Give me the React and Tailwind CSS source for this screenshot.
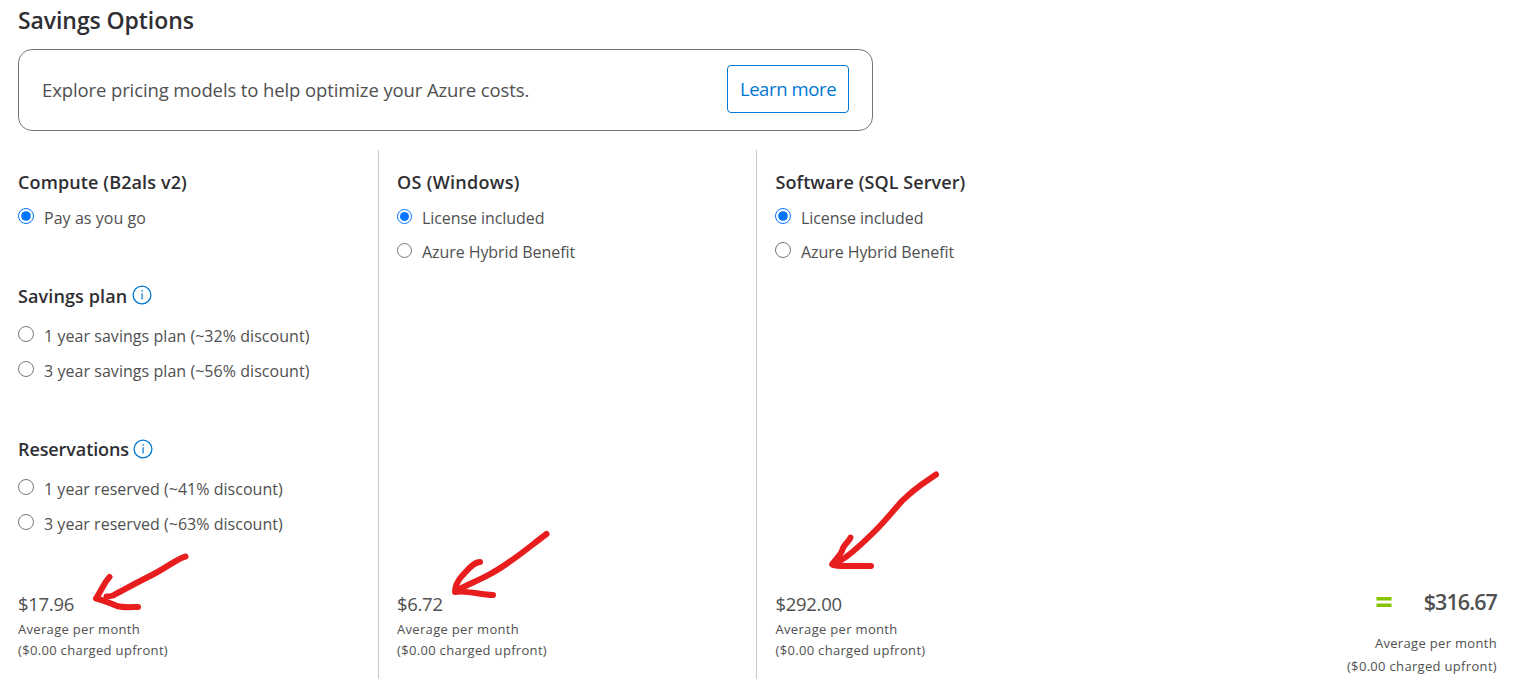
const savingsPlans = ['1 year savings plan (~32% discount)', '3 year savings plan (~56% discount)'];
const reservations = ['1 year reserved (~41% discount)', '3 year reserved (~63% discount)'];
const licenses = ['License included', 'Azure Hybrid Benefit'];

function InfoIcon({ className }) {
  return (
    <svg width="20" height="20" viewBox="0 0 20 20" fill="none" className={`shrink-0 ${className}`}>
      <circle cx="10" cy="10" r="8.9" stroke="#0078d4" strokeWidth="1.3" />
      <path d="M10.1 8.2V14.6" stroke="#0078d4" strokeWidth="1.2" />
      <circle cx="10.1" cy="5.9" r="0.8" fill="#0078d4" />
    </svg>
  );
}

function Heading({ children, tracking = 'tracking-[0.12px]' }) {
  return (
    <h3 className={`flex h-6 items-center text-[18px] font-semibold whitespace-nowrap text-[#2f2f33] ${tracking}`}>
      {children}
    </h3>
  );
}

function Option({ name, label, checked, compact, tracking = 'tracking-[0.03px]', size = 'size-4' }) {
  return (
    <label className={`flex items-center whitespace-nowrap ${compact ? 'h-[34px]' : 'h-[35px]'}`}>
      <input type="radio" name={name} defaultChecked={checked} className={`relative -top-0.5 m-0 shrink-0 ${size}`} />
      <span className={`ml-2.5 text-[16px] ${tracking}`}>{label}</span>
    </label>
  );
}

function Price({ amount }) {
  return (
    <div className="whitespace-nowrap">
      <div className="h-6 text-[18.5px] leading-6 tracking-[-0.3px]">{amount}</div>
      <div className="mt-[3px] text-[13px] leading-[21px] tracking-[0.32px]">
        <p>Average per month</p>
        <p>($0.00 charged upfront)</p>
      </div>
    </div>
  );
}

function Arrows() {
  return (
    <svg
      className="pointer-events-none absolute top-0 left-0"
      width="1513"
      height="679"
      viewBox="0 0 1513 679"
      fill="none"
      stroke="#e81e1e"
      strokeWidth="6"
      strokeLinecap="round"
      strokeLinejoin="round"
    >
      <path d="M185.500 556.500C178 558 165 569 148 577C134 584 118 593 113 595.500C110 596.500 108 596.500 106.500 596.500" />
      <path d="M109.500 577C104 583 101 591 96 598.500C104 600 111 604 117 606C124 608 132 607 138 607" />
      <path d="M546.500 534C529 547 512 562 492 573C480 580 468 584 458 590" />
      <path d="M480 562C473 562 466 572 461 577C457 582 455 586 455 592C468 590 480 595 493 595" />
      <path d="M936 474.500C927 481 917 486 902 501C892 512 886 520 876 530C865 541 850 556 838 562" />
      <path d="M850.500 537.500C849 542 843 545 842 551C839 557 835 560 832 564.500C834 566.500 839 566 845 566L871 566" />
    </svg>
  );
}

export default function App() {
  return (
    <div className="relative flex h-[679px] w-[1513px] flex-col overflow-hidden bg-white font-['Open_Sans',sans-serif] text-[#505050]">
      <h2 className="mt-[5px] ml-[18px] h-[31px] text-[23px] leading-[31px] font-semibold tracking-[-0.08px] text-[#2f2f33]">
        Savings Options
      </h2>
      <div className="mt-[13px] ml-[18px] flex h-[82px] w-[855px] shrink-0 items-center justify-between rounded-[14px] border border-[#757575] px-[23px]">
        <p className="text-[18.5px] tracking-[-0.11px]">Explore pricing models to help optimize your Azure costs.</p>
        <button className="mb-0.5 h-12 w-[122px] rounded border border-[#0078d4] text-[18.5px] tracking-[-0.4px] whitespace-nowrap text-[#0078d4]">
          Learn more
        </button>
      </div>

      <div className="mt-[19px] grid flex-1 grid-cols-[378px_378px_378px_1fr]">
        <section className="flex flex-col pt-5 pb-[18px] pl-[18px]">
          <Heading>Compute (B2als v2)</Heading>
          <div className="mt-[7px]">
            <Option name="compute" label="Pay as you go" checked compact tracking="tracking-[0.05px]" />
          </div>
          <div className="mt-[49px]">
            <Heading>
              Savings plan <InfoIcon className="-mt-0.5 ml-[5px]" />
            </Heading>
            <div className="mt-2.5">
              {savingsPlans.map((label) => (
                <Option key={label} name="compute" label={label} tracking="tracking-[0.05px]" />
              ))}
            </div>
          </div>
          <div className="mt-[49px]">
            <Heading tracking="tracking-[-0.1px]">
              Reservations <InfoIcon className="ml-1" />
            </Heading>
            <div className="mt-2.5">
              {reservations.map((label) => (
                <Option key={label} name="compute" label={label} />
              ))}
            </div>
          </div>
          <div className="mt-auto">
            <Price amount="$17.96" />
          </div>
        </section>

        <section className="flex flex-col border-l border-[#c8c8c8] pt-5 pb-[18px] pl-[18px]">
          <Heading tracking="tracking-[0.3px]">OS (Windows)</Heading>
          <div className="mt-[7px]">
            {licenses.map((label, i) => (
              <Option
                key={label}
                name="os"
                label={label}
                checked={i === 0}
                compact
                tracking="tracking-[-0.07px]"
                size="size-[15px]"
              />
            ))}
          </div>
          <div className="mt-auto">
            <Price amount="$6.72" />
          </div>
        </section>

        <section className="flex flex-col border-l border-[#c8c8c8] pt-5 pb-[18px] pl-[18.5px]">
          <Heading tracking="tracking-[0.08px]">Software (SQL Server)</Heading>
          <div className="-ml-0.5 mt-[7px] pl-[1.5px]">
            {licenses.map((label) => (
              <Option
                key={label}
                name="software"
                label={label}
                checked={label === licenses[0]}
                compact
                tracking="tracking-[-0.07px]"
              />
            ))}
          </div>
          <div className="mt-auto">
            <Price amount="$292.00" />
          </div>
        </section>

        <section className="flex flex-col items-end justify-end pr-4 whitespace-nowrap">
          <div className="flex h-7 items-center">
            <svg width="16" height="12" viewBox="0 0 16 12" className="mr-8" fill="#86c400">
              <path d="M0.500 1h15v3.500h-15zM0.500 7.500h15V11h-15z" />
            </svg>
            <span className="text-[21.5px] font-semibold tracking-[-0.9px]">$316.67</span>
          </div>
          <div className="mt-4 mb-px text-right text-[13px] leading-[23px] tracking-[0.32px]">
            <p>Average per month</p>
            <p>($0.00 charged upfront)</p>
          </div>
        </section>
      </div>

      <Arrows />
    </div>
  );
}
